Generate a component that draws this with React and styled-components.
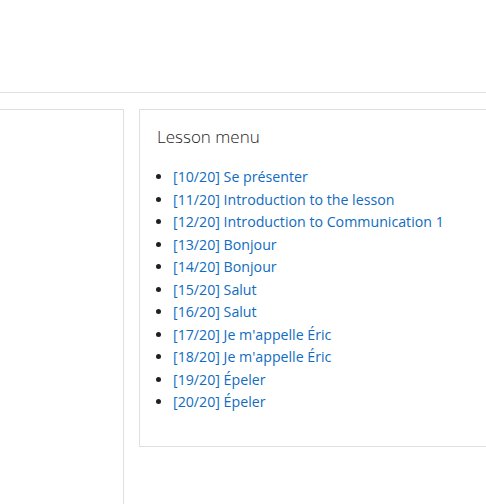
import React from "react";
import styled, { createGlobalStyle } from "styled-components";

const GlobalStyle = createGlobalStyle`
  html, body {
    margin: 0;
    padding: 0;
    background: #fff;
  }
  body {
    font-family: "Open Sans", "Noto Sans", "Liberation Sans", sans-serif;
    color: #1d2125;
  }
`;

const Page = styled.div`
  width: 486px;
  height: 504px;
  overflow: hidden;
`;

const Header = styled.div`
  height: 92px;
  border-bottom: 1px solid #dfdfdf;
`;

const Content = styled.div`
  display: grid;
  grid-template-columns: 134px 400px;
  column-gap: 15px;
  margin-left: -10px;
  padding-top: 16px;
`;

const Region = styled.div`
  height: 420px;
  border: 1px solid #dfdfdf;
`;

const Card = styled.section`
  align-self: start;
  border: 1px solid #dfdfdf;
  padding: 17px 17px 32px;
`;

const Title = styled.h5`
  margin: 0 0 19px;
  font-size: 17px;
  font-weight: 300;
  line-height: 1.2;
  color: #1d2125;
`;

const Menu = styled.ul`
  margin: 0;
  padding-left: 16px;
  font-size: 14.2px;
  line-height: 22.5px;
`;

const Item = styled.li`
  color: #1d2125;
`;

const Link = styled.a`
  color: #0f6cbf;
  text-decoration: none;
`;

const lessons = [
  "[10/20] Se présenter",
  "[11/20] Introduction to the lesson",
  "[12/20] Introduction to Communication 1",
  "[13/20] Bonjour",
  "[14/20] Bonjour",
  "[15/20] Salut",
  "[16/20] Salut",
  "[17/20] Je m'appelle Éric",
  "[18/20] Je m'appelle Éric",
  "[19/20] Épeler",
  "[20/20] Épeler",
];

const App = () => {
  return (
    <Page>
      <GlobalStyle />
      <Header />
      <Content>
        <Region />
        <Card>
          <Title>Lesson menu</Title>
          <Menu>
            {lessons.map((l, i) => (
              <Item key={i}>
                <Link href="#">{l}</Link>
              </Item>
            ))}
          </Menu>
        </Card>
      </Content>
    </Page>
  );
};

export default App;
